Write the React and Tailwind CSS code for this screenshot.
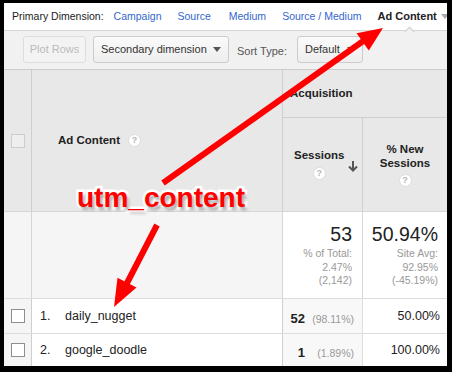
const font = { fontFamily: '"Liberation Sans", Arial, sans-serif' };

function Help() {
  return (
    <span className="inline-flex h-[13px] w-[13px] items-center justify-center rounded-full border border-[#dcdcdc] bg-white text-[9px] font-bold leading-none text-[#b5b5b5]">
      ?
    </span>
  );
}

function Caret({ color = '#555' }) {
  return (
    <svg width="8" height="5" viewBox="0 0 8 5" className="shrink-0">
      <path d="M0 0h8L4 5z" fill={color} />
    </svg>
  );
}

function Checkbox({ light }) {
  return (
    <span
      className={
        light
          ? 'block h-[14px] w-[14px] border border-[#cdcdcd] bg-[#eeeeee]'
          : 'block h-[14px] w-[14px] border border-[#8f8f8f] bg-white'
      }
    />
  );
}

const rows = [
  { n: '1.', name: 'daily_nugget', s: '52', pct: '(98.11%)', nw: '50.00%', h: 'h-[35px]', pt: 'pt-[10px]' },
  { n: '2.', name: 'google_doodle', s: '1', pct: '(1.89%)', nw: '100.00%', h: 'h-[33px]', pt: 'pt-[9px]' },
];

export default function App() {
  return (
    <div className="relative h-[372px] w-[452px] overflow-hidden bg-black" style={font}>
      <div className="ml-[4px] mt-[3px] h-[363px] w-[443px] overflow-hidden bg-white text-[#222]">
        {/* primary dimension bar */}
        <div className="flex h-[28px] items-center whitespace-nowrap border-b border-[#d6d6d6] pl-[8px] text-[10.5px]">
          <span className="shrink-0 text-[#222]">Primary Dimension:</span>
          <span className="ml-[10px] shrink-0 text-[#3366cc]">Campaign</span>
          <span className="ml-[16px] shrink-0 text-[#3366cc]">Source</span>
          <span className="ml-[18px] shrink-0 text-[#3366cc]">Medium</span>
          <span className="ml-[16px] shrink-0 text-[#3366cc]">Source / Medium</span>
          <span className="ml-[16px] shrink-0 text-[11px] font-bold text-[#222]">Ad Content</span>
          <span className="ml-[4px] shrink-0">
            <Caret color="#aaa" />
          </span>
        </div>

        {/* toolbar */}
        <div className="flex h-[39px] items-start gap-[7px] whitespace-nowrap border-b border-[#cccccc] bg-[#f1f1f1] pl-[19px] pt-[5px] text-[11px]">
          <button className="flex h-[27px] w-[63px] shrink-0 items-center justify-center rounded-[3px] border border-[#dddddd] bg-[#f3f3f3] text-[#bbbbbb]">
            Plot Rows
          </button>
          <button className="flex h-[27px] w-[136px] shrink-0 items-center justify-between rounded-[3px] border border-[#cccccc] bg-gradient-to-b from-[#fafafa] to-[#eeeeee] pl-[7px] pr-[7px] text-[#333]">
            Secondary dimension
            <Caret />
          </button>
          <span className="ml-[1px] self-center pb-[3px] text-[#555]">Sort Type:</span>
          <button className="ml-[3px] flex h-[27px] w-[66px] shrink-0 items-center justify-between rounded-[3px] border border-[#cccccc] bg-gradient-to-b from-[#fafafa] to-[#eeeeee] pl-[7px] pr-[7px] text-[#333]">
            Default
            <Caret />
          </button>
        </div>

        {/* table */}
        <div className="grid grid-cols-[28px_251px_80px_84px] grid-rows-[48px_93px_87px]">
          <div className="row-span-2 flex items-center justify-center border-r border-[#cfcfcf] bg-[#e8e8e8]">
            <Checkbox light />
          </div>
          <div className="row-span-2 flex items-center gap-[8px] border-r border-[#cfcfcf] bg-[#e8e8e8] pl-[26px] text-[11.5px] font-bold">
            Ad Content
            <Help />
          </div>
          <div className="col-span-2 flex items-center border-b border-[#cfcfcf] bg-[#e8e8e8] pl-[7px] text-[11.5px] font-bold">
            Acquisition
          </div>
          <div className="flex items-center border-r border-[#cfcfcf] bg-[#e8e8e8] pl-[11px] pr-[4px]">
            <div className="flex flex-col items-center gap-[5px] text-[11.5px] font-bold leading-[13px]">
              Sessions
              <Help />
            </div>
            <svg width="10" height="11" viewBox="0 0 10 11" className="ml-auto mt-[4px]">
              <path d="M5 0v9M1 5.5l4 4 4-4" fill="none" stroke="#555" strokeWidth="2" />
            </svg>
          </div>
          <div className="flex flex-col items-center justify-center gap-[4px] bg-[#e8e8e8] text-center text-[11.5px] font-bold leading-[14px]">
            <div>
              % New
              <br />
              Sessions
            </div>
            <Help />
          </div>

          {/* summary */}
          <div className="border-r border-t border-[#d6d6d6] bg-[#f5f5f5]" />
          <div className="border-r border-t border-[#d6d6d6] bg-[#f5f5f5]" />
          <div className="border-r border-t border-[#d6d6d6] bg-white pr-[10px] pt-[11px] text-right">
            <div className="text-[19.5px] leading-[22px] text-[#222]">53</div>
            <div className="mt-[2px] text-[10.5px] leading-[13.5px] text-[#999]">
              % of Total:
              <br />
              2.47%
              <br />
              (2,142)
            </div>
          </div>
          <div className="border-t border-[#d6d6d6] bg-white pr-[9px] pt-[11px] text-right">
            <div className="text-[19.5px] leading-[22px] text-[#222]">50.94%</div>
            <div className="mt-[2px] text-[10.5px] leading-[13.5px] text-[#999]">
              Site Avg:
              <br />
              92.95%
              <br />
              (-45.19%)
            </div>
          </div>
        </div>

        {rows.map((r) => (
          <div key={r.n} className={`grid grid-cols-[28px_251px_80px_84px] border-t border-[#dddddd] ${r.h}`}>
            <div className="flex items-center justify-center border-r border-[#cfcfcf] bg-[#f5f5f5]">
              <Checkbox />
            </div>
            <div className="flex items-center border-r border-[#cfcfcf] bg-white pl-[8px] text-[12.5px]">
              <span className="w-[25px]">{r.n}</span>
              {r.name}
            </div>
            <div className={`flex items-baseline justify-end self-stretch border-r border-[#dddddd] bg-[#f8f8f8] pr-[8px] ${r.pt}`}>
              <span className="text-[13px] font-bold">{r.s}</span>
              <span className="w-[49px] text-right text-[10.5px] text-[#999]">{r.pct}</span>
            </div>
            <div className="flex items-center justify-end bg-white pr-[7px] text-[12.5px]">{r.nw}</div>
          </div>
        ))}
      </div>

      {/* notch under selected dimension */}
      <div className="absolute left-[406px] top-[28px] h-[7px] w-[7px] rotate-45 border-l border-t border-[#cfcfcf] bg-[#f1f1f1]" />

      {/* annotation arrows */}
      <svg className="pointer-events-none absolute left-0 top-0" width="452" height="372" viewBox="0 0 452 372">
        <line x1="163" y1="183" x2="366" y2="39" stroke="#ff0000" strokeWidth="6" />
        <path d="M383 28 L356.6 33.2 L368.8 50.6 Z" fill="#ff0000" />
        <line x1="157" y1="225" x2="126" y2="285" stroke="#ff0000" strokeWidth="6" />
        <path d="M114 307 L117.5 277.8 L136.5 287.6 Z" fill="#ff0000" />
      </svg>

      <div className="pointer-events-none absolute left-[77px] top-[184px] text-[28px] font-bold leading-[28px] text-[#ff0000] [-webkit-text-stroke:5px_white] [paint-order:stroke_fill] [text-shadow:2px_3px_3px_rgba(0,0,0,0.35)]">
        utm_content
      </div>
    </div>
  );
}
